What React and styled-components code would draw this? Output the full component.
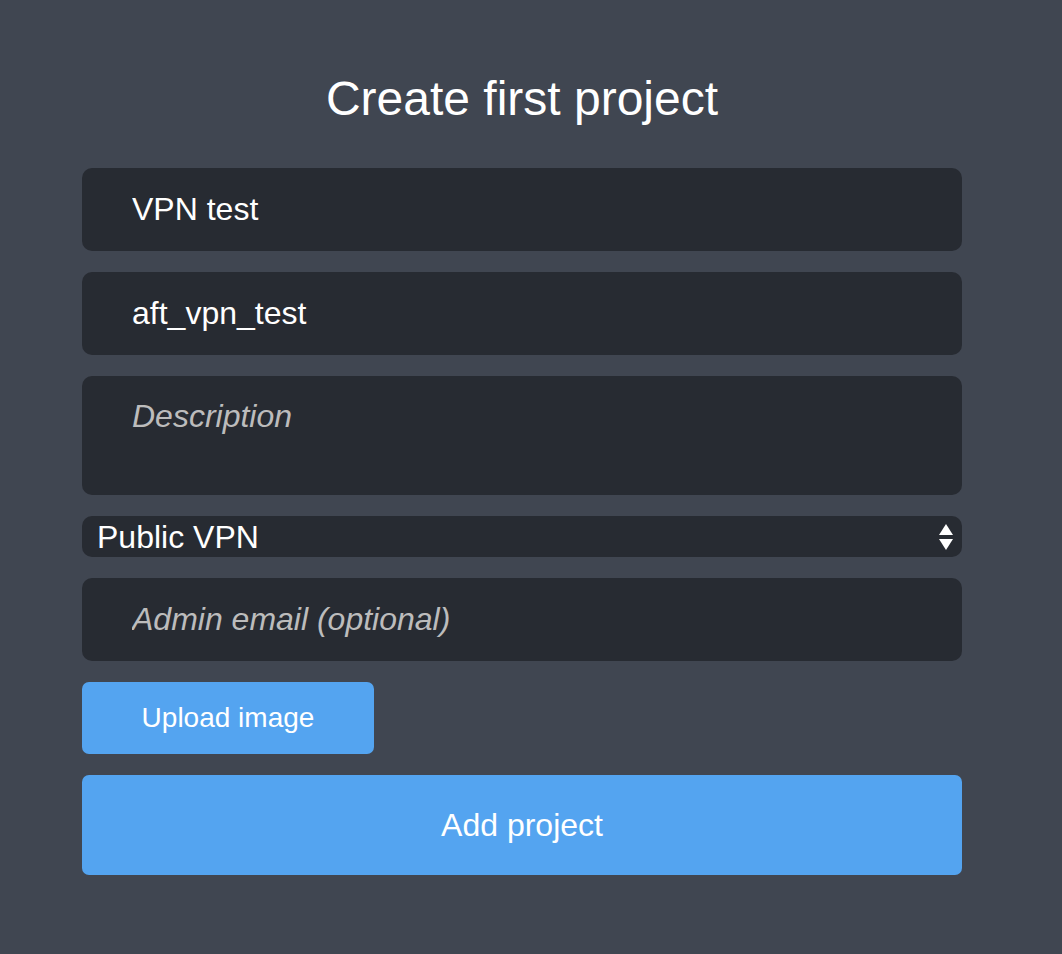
import React from "react";
import styled, { createGlobalStyle } from "styled-components";

const colors = {
  page: "#404651",
  field: "#272b32",
  text: "#ffffff",
  placeholder: "#bcbcbc",
  blue: "#54a4f0",
};

const GlobalStyle = createGlobalStyle`
  html, body {
    margin: 0;
    padding: 0;
    background: ${colors.page};
    font-family: "Liberation Sans", Arial, Helvetica, sans-serif;
  }
  body {
    min-height: 954px;
  }
`;

const Page = styled.div`
  padding: 71px 0 0 82px;
`;

const Form = styled.form`
  width: 880px;
  display: flex;
  flex-direction: column;
  gap: 21px;
`;

const Title = styled.h1`
  margin: 0 0 21px;
  text-align: center;
  font-size: 48px;
  font-weight: 400;
  line-height: 55px;
  color: ${colors.text};
`;

const fieldBase = `
  box-sizing: border-box;
  width: 100%;
  border: none;
  outline: none;
  background: ${colors.field};
  color: ${colors.text};
  font-family: "Liberation Sans", Arial, Helvetica, sans-serif;
  font-size: 32px;
  border-radius: 10px;
  &::placeholder {
    color: ${colors.placeholder};
    font-style: italic;
  }
`;

const Input = styled.input`
  ${fieldBase}
  height: 83px;
  padding: 0 50px;
`;

const TextArea = styled.textarea`
  ${fieldBase}
  height: 119px;
  padding: 22px 50px;
  resize: none;
  display: block;
`;

const SelectWrap = styled.div`
  position: relative;
  height: 41px;
`;

const Select = styled.select`
  ${fieldBase}
  appearance: none;
  height: 41px;
  padding: 0 40px 0 15px;
`;

const Arrows = styled.svg`
  position: absolute;
  right: 8px;
  top: 8px;
  pointer-events: none;
`;

const Button = styled.button`
  border: none;
  border-radius: 7px;
  background: ${colors.blue};
  color: ${colors.text};
  font-family: "Liberation Sans", Arial, Helvetica, sans-serif;
  font-size: ${(p) => (p.$big ? "32px" : "28px")};
  width: ${(p) => (p.$big ? "100%" : "292px")};
  height: ${(p) => (p.$big ? "100px" : "72px")};
  cursor: pointer;
`;

export default function App() {
  return (
    <Page>
      <GlobalStyle />
      <Form onSubmit={(e) => e.preventDefault()}>
        <Title>Create first project</Title>
        <Input defaultValue="VPN test" />
        <Input defaultValue="aft_vpn_test" />
        <TextArea placeholder="Description" />
        <SelectWrap>
          <Select defaultValue="public">
            <option value="public">Public VPN</option>
            <option value="private">Private VPN</option>
          </Select>
          <Arrows width="16" height="26" viewBox="0 0 16 26">
            <path d="M8 0 L15 11 L1 11 Z" fill="#fff" />
            <path d="M1 15 L15 15 L8 26 Z" fill="#fff" />
          </Arrows>
        </SelectWrap>
        <Input placeholder="Admin email (optional)" />
        <Button type="button">Upload image</Button>
        <Button $big type="submit">Add project</Button>
      </Form>
    </Page>
  );
}
